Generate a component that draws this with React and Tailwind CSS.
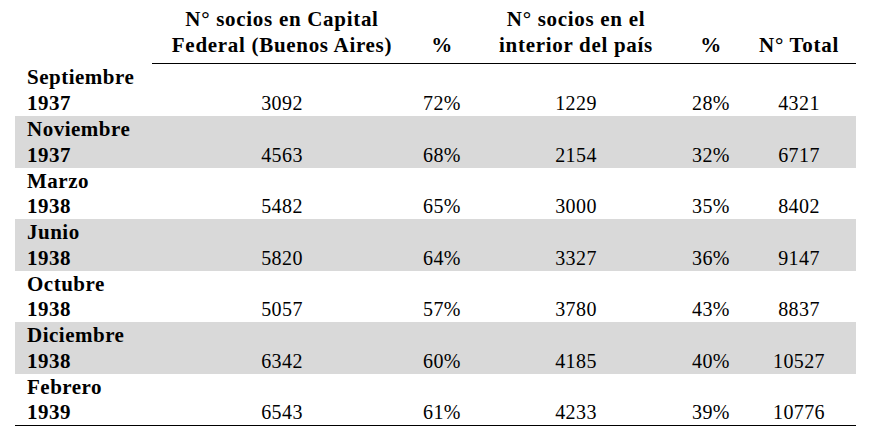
import React from 'react';

const rows = [
  ['Septiembre', '1937', '3092', '72%', '1229', '28%', '4321'],
  ['Noviembre', '1937', '4563', '68%', '2154', '32%', '6717'],
  ['Marzo', '1938', '5482', '65%', '3000', '35%', '8402'],
  ['Junio', '1938', '5820', '64%', '3327', '36%', '9147'],
  ['Octubre', '1938', '5057', '57%', '3780', '43%', '8837'],
  ['Diciembre', '1938', '6342', '60%', '4185', '40%', '10527'],
  ['Febrero', '1939', '6543', '61%', '4233', '39%', '10776'],
];

const cols = 'grid grid-cols-[137px_260px_60px_208px_62px_114px]';

const App = () => {
  return (
    <div
      className="w-[871px] h-[446px] bg-white text-black text-[20px] leading-[25.7px] tracking-[0.4px]"
      style={{ fontFamily: '"Liberation Serif", "Times New Roman", serif' }}
    >
      <div className="ml-[15px] w-[841px] pt-[7px]">
        {/* header */}
        <div className={cols + ' font-bold text-[21px] tracking-[0.7px]'}>
          <div />
          <div className="text-center border-b border-black pb-[5px]">
            N° socios en Capital
            <br />
            Federal (Buenos Aires)
          </div>
          <div className="flex items-end justify-center border-b border-black pb-[5px]">%</div>
          <div className="text-center border-b border-black pb-[5px]">
            N° socios en el
            <br />
            interior del país
          </div>
          <div className="flex items-end justify-center border-b border-black pb-[5px]">%</div>
          <div className="flex items-end justify-center border-b border-black pb-[5px]">N° Total</div>
        </div>

        {/* body */}
        <div className="border-b border-black">
          {rows.map((r, i) => (
            <div
              key={r[0]}
              className={cols + ' h-[51.57px] pt-[1px] ' + (i % 2 === 1 ? 'bg-[#d9d9d9]' : '')}
            >
              <div className="pl-[12px] font-bold text-[21px] tracking-[0.5px]">
                {r[0]}
                <br />
                {r[1]}
              </div>
              <div className="pt-[25.7px] text-center">{r[2]}</div>
              <div className="pt-[25.7px] text-center">{r[3]}</div>
              <div className="pt-[25.7px] text-center">{r[4]}</div>
              <div className="pt-[25.7px] text-center">{r[5]}</div>
              <div className="pt-[25.7px] text-center">{r[6]}</div>
            </div>
          ))}
        </div>
      </div>
    </div>
  );
};

export default App;
